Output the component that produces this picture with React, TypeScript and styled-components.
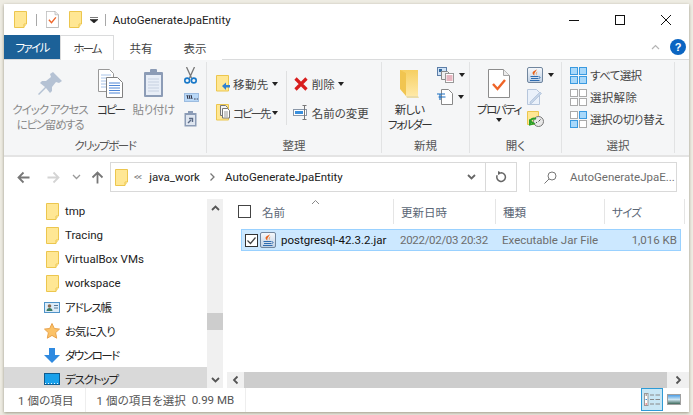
import React from "react";
import styled, { createGlobalStyle } from "styled-components";

const GlobalStyle = createGlobalStyle`
  html, body {
    margin: 0;
    height: 100%;
    overflow: hidden;
    background: #eeece3;
  }
  body {
    font-family: Roboto, "Noto Sans CJK JP", sans-serif;
    font-size: 11.5px;
    font-feature-settings: "palt";
    color: #333;
  }
`;

const Folder = ({ w = 13, h = 17 }: { w?: number; h?: number }) => (
  <svg width={w} height={h} viewBox="0 0 13 17">
    <path d="M.5.5h12v12.5h-2.5v3.500H.5z" fill="#ffe794" stroke="#ecc64e" />
    <path d="M10 13.500h2.500l-2.500 3z" fill="#f5d469" />
  </svg>
);

const PropertyFile = ({ size = 1 }: { size?: number }) => (
  <svg width={22 * size} height={29 * size} viewBox="0 0 22 29">
    <path d="M.5.5h15l6 6v22H.5z" fill="#fff" stroke="#8c8c8c" />
    <path d="M15.500.5v6h6" fill="#ececec" stroke="#a5a5a5" />
    <path d="M5 15l4.500 5L17 11" fill="none" stroke="#ef6427" strokeWidth="2.400" />
  </svg>
);

const Pin = () => (
  <svg width="24" height="24" viewBox="0 0 24 24">
    <path d="M15 0l9 9-3 2-3-1-4 5 0 4-2 2-4-5-7 7-1-1 7-7-5-4 2-2h4l5-4-1-3z" fill="#b5c2d4" />
  </svg>
);

const CopyDocs = () => (
  <svg width="25" height="29" viewBox="0 0 25 29">
    <path d="M.5.5h11l4 4v18H.5z" fill="#fff" stroke="#999" />
    <path d="M3 6h10M3 9h10M3 12h10M3 15h10M3 18h10" stroke="#a8c4e8" />
    <path d="M8.500 8.500h11l5 5v15h-16z" fill="#fff" stroke="#808080" />
    <path d="M11 14h11M11 16.500h11M11 19h11M11 21.500h11M11 24h11" stroke="#4e86d6" />
  </svg>
);

const Clipboard = () => (
  <svg width="21" height="29" viewBox="0 0 21 29">
    <rect x="1" y="3" width="19" height="25" rx="1" fill="#8c9cb6" />
    <rect x="3" y="6" width="15" height="20" fill="#e8eef7" />
    <path d="M5 10h11M5 13h11M5 16h11M5 19h11M5 22h11" stroke="#c6d0e0" />
    <rect x="7" y="0" width="7" height="5" rx="1" fill="#8c9cb6" />
  </svg>
);

const Scissors = () => (
  <svg width="13" height="17" viewBox="0 0 13 17">
    <path d="M2.500 0l5 11M10.500 0l-5 11" stroke="#777" strokeWidth="1.300" fill="none" />
    <circle cx="3.200" cy="13.500" r="2.400" fill="none" stroke="#1878c8" strokeWidth="1.600" />
    <circle cx="9.800" cy="13.500" r="2.400" fill="none" stroke="#1878c8" strokeWidth="1.600" />
  </svg>
);

const PathCopy = () => (
  <svg width="15" height="9" viewBox="0 0 15 9">
    <rect x=".5" y=".5" width="14" height="8" fill="#b9d8f7" stroke="#9cbce0" />
    <path d="M3 2l1 4M5 2l1 4M7 2l1 4" stroke="#223" />
    <path d="M10 6h.8M11.500 6h.8M13 6h.8" stroke="#223" />
  </svg>
);

const Shortcut = () => (
  <svg width="13" height="16" viewBox="0 0 13 16">
    <rect x=".5" y="2" width="12" height="13.500" fill="#8c9cb6" />
    <rect x="2" y="4" width="9" height="10" fill="#dfe6f0" />
    <rect x="4" y="0" width="5" height="3" fill="#8c9cb6" />
    <path d="M4 12l3-3M5 7.500h3.500V11" stroke="#5a6a85" strokeWidth="1.400" fill="none" />
  </svg>
);

const MoveTo = () => (
  <svg width="14" height="17" viewBox="0 0 14 17">
    <path d="M.5.500h12v15.500H.5z" fill="#ffe794" stroke="#ecc64e" />
    <path d="M6 11l4-3.500V10h4v2.500h-4V15z" fill="#2f80d0" />
  </svg>
);

const CopyTo = () => (
  <svg width="14" height="17" viewBox="0 0 14 17">
    <path d="M.5.500h12v15.500H.5z" fill="#ffe794" stroke="#ecc64e" />
    <path d="M4.500 1.500h5l2 2v8h-7z" fill="#f4f4f4" stroke="#777" />
    <path d="M6.500 4.500h5l2 2v7.500h-7z" fill="#fff" stroke="#777" />
    <path d="M8 8h4M8 10h4M8 12h4" stroke="#999" />
  </svg>
);

const DeleteX = () => (
  <svg width="14" height="14" viewBox="0 0 14 14">
    <path d="M1.500 1.500l11 11M12.500 1.500l-11 11" stroke="#d81e1e" strokeWidth="3.200" />
  </svg>
);

const Rename = () => (
  <svg width="16" height="15" viewBox="0 0 16 15">
    <rect x=".5" y="4.500" width="13" height="6" fill="#fff" stroke="#8a97a8" />
    <rect x="2" y="6" width="8" height="3" fill="#3a8fdc" />
    <path d="M11.500 1v13M9.500.5h4M9.500 14.500h4" stroke="#777" fill="none" />
  </svg>
);

const NewFolder = () => (
  <svg width="19" height="28" viewBox="0 0 19 28">
    <defs>
      <linearGradient id="nf" x1="0" y1="0" x2="0" y2="1">
        <stop offset="0" stopColor="#f6cf62" />
        <stop offset="1" stopColor="#ffe9a6" />
      </linearGradient>
    </defs>
    <path d="M0 0h18v26l-12 0-1-7-5-1z" fill="url(#nf)" />
    <path d="M0 0l6 3v23l-6-7z" fill="#f1c550" />
    <path d="M6 26h12l1 2H7z" fill="#eadca8" />
  </svg>
);

const NewItem = () => (
  <svg width="17" height="16" viewBox="0 0 17 16">
    <rect x=".5" y=".5" width="9" height="8" fill="#cfe2f6" stroke="#5c7ea8" />
    <rect x="2" y="2" width="3" height="3" fill="#33689c" />
    <path d="M4.500 4.500h6l2 2v6h-8z" fill="#eee" stroke="#888" />
    <rect x="8.500" y="6.500" width="8" height="9" fill="#fff" stroke="#999" />
    <path d="M9.500 9h6M9.500 11h6M9.500 13h6" stroke="#d06a80" />
  </svg>
);

const EasyAccess = () => (
  <svg width="16" height="16" viewBox="0 0 16 16">
    <path d="M4.500.5h7l4 4v11h-11z" fill="#fff" stroke="#888" />
    <path d="M0 5h8M1.500 8h7M3 5v6" stroke="#1c6ec0" strokeWidth="1.200" />
  </svg>
);

const Java = ({ s = 16 }: { s?: number }) => (
  <svg width={s} height={s} viewBox="0 0 16 16">
    <defs>
      <linearGradient id={`jar${s}`} x1="0" y1="0" x2="0" y2="1">
        <stop offset="0" stopColor="#f7f9fc" />
        <stop offset="1" stopColor="#bfd0e4" />
      </linearGradient>
    </defs>
    <rect x=".5" y=".5" width="15" height="15" rx="1.500" fill={`url(#jar${s})`} stroke="#71869e" />
    <path d="M9.500 2C10.500 4 6.500 5 7.500 8.500 5 7 5 5 7 4 8.500 3.300 9.500 3 9.500 2z" fill="#e8621a" />
    <path d="M11 4.500C9.500 5.500 9 6.500 9.800 8.500 8 7 8.500 5.300 11 4.500z" fill="#f08030" />
    <path d="M3.500 9.500h7.500M4 11.500h7M3 13.500h9.500" stroke="#2f6cb0" />
    <path d="M11.500 9.500c2 0 2 2 0 2" stroke="#2f6cb0" fill="none" />
  </svg>
);

const EditDoc = () => (
  <svg width="15" height="16" viewBox="0 0 15 16">
    <path d="M.5.5h9l3 3v12H.5z" fill="#eaf1fa" stroke="#b6c6dc" />
    <path d="M3 13L13 3l1.500 1.500-10 10H3z" fill="#c4d4e8" stroke="#a8bbd4" strokeWidth=".6" />
  </svg>
);

const History = () => (
  <svg width="17" height="16" viewBox="0 0 17 16">
    <path d="M.5.5h11v13H.5z" fill="#ffe794" stroke="#ecc64e" />
    <circle cx="11.500" cy="10.500" r="5" fill="#e8e8e8" stroke="#777" />
    <path d="M11.500 10.500l2-2M9 12l1-1" stroke="#555" />
    <path d="M3 11a4 4 0 0 1 6-3M6.500 12.500l-3.500 1V10z" fill="none" stroke="#2aa02a" strokeWidth="2" />
  </svg>
);

const SelectGrid = ({ cells, border }: { cells: boolean[]; border: string[] }) => (
  <svg width="17" height="17" viewBox="0 0 17 17">
    {[0, 1, 2, 3].map((i) => (
      <rect
        key={i}
        x={(i % 2) * 9 + 0.5}
        y={Math.floor(i / 2) * 9 + 0.5}
        width="7"
        height="7"
        fill={cells[i] ? "#a8d8fa" : "#fff"}
        stroke={border[i]}
      />
    ))}
  </svg>
);

const ArrowIcon = ({ dir, color }: { dir: "left" | "right" | "up"; color: string }) => {
  const rotate = dir === "left" ? 0 : dir === "right" ? 180 : 90;
  return (
    <svg width="13" height="13" viewBox="0 0 13 13" style={{ transform: `rotate(${rotate}deg)` }}>
      <path d="M6.500 1.500l-5 5 5 5M1.500 6.500h11" fill="none" stroke={color} strokeWidth="1.800" />
    </svg>
  );
};

const Chevron = ({ dir, color = "#666", w = 1.800 }: { dir: "up" | "down" | "left" | "right"; color?: string; w?: number }) => {
  const rotate = { up: 180, down: 0, left: 90, right: -90 }[dir];
  return (
    <svg width="9" height="6" viewBox="0 0 9 6" style={{ transform: `rotate(${rotate}deg)` }}>
      <path d="M1 1l3.500 3.500L8 1" fill="none" stroke={color} strokeWidth={w} />
    </svg>
  );
};

const Refresh = () => (
  <svg width="11" height="12" viewBox="0 0 11 12">
    <path d="M5 1.800a4.300 4.300 0 1 1-3.800 2.500" fill="none" stroke="#666" strokeWidth="1.500" />
    <path d="M2 0l4 2-4 2z" fill="#666" />
  </svg>
);

const SearchGlass = () => (
  <svg width="13" height="13" viewBox="0 0 13 13">
    <circle cx="8" cy="5" r="4" fill="none" stroke="#777" />
    <path d="M5 8l-4.500 4.500" stroke="#777" />
  </svg>
);

const Check = () => (
  <svg width="13" height="13" viewBox="0 0 13 13">
    <rect x=".5" y=".5" width="12" height="12" fill="#fff" stroke="#333" />
    <path d="M2.500 6.500l3 3 5-6" fill="none" stroke="#444" strokeWidth="1.200" />
  </svg>
);

const AddressBook = () => (
  <svg width="16" height="11" viewBox="0 0 16 11">
    <rect x=".5" y=".5" width="15" height="10" fill="#dcebf8" stroke="#4f93c8" />
    <circle cx="5.500" cy="4" r="1.800" fill="#8a6a50" />
    <path d="M2.500 9c0-4 6-4 6 0z" fill="#3c7a60" />
    <path d="M10 3.500h4M10 6h4" stroke="#5a7a98" />
  </svg>
);

const Star = () => (
  <svg width="16" height="16" viewBox="0 0 16 16">
    <path d="M8 .5l2.300 5 5.200.6-3.900 3.600 1.100 5.500L8 12.400l-4.700 2.800 1.100-5.500L.5 6.100l5.200-.6z" fill="#fbc267" stroke="#e8a24c" />
  </svg>
);

const Download = () => (
  <svg width="16" height="15" viewBox="0 0 16 15">
    <path d="M5 0h6v7h5l-8 8-8-8h5z" fill="#2f8ae0" />
  </svg>
);

const Desktop = () => (
  <svg width="16" height="12" viewBox="0 0 16 12">
    <rect x=".5" y=".5" width="15" height="11" fill="#19a0ea" stroke="#0f5c90" />
    <path d="M1 10.500h14" stroke="#e8f5ff" strokeDasharray="1 2" />
  </svg>
);

const DetailsView = () => (
  <svg width="16" height="13" viewBox="0 0 16 13">
    <rect x=".5" y=".5" width="3.500" height="12" fill="#fff" stroke="#999" />
    <path d="M1.500 2h1.500" stroke="#555" strokeWidth="1.200" />
    <path d="M1.500 6.500h1.500" stroke="#3a8fdc" strokeWidth="1.200" />
    <path d="M1.500 11h1.500" stroke="#d63030" strokeWidth="1.200" />
    <path d="M6 2h4M11.500 2H16M6 6.500h4M11.500 6.500H16M6 11h4M11.500 11H16" stroke="#888" />
  </svg>
);

const ThumbView = () => (
  <svg width="14" height="11" viewBox="0 0 14 11">
    <defs>
      <linearGradient id="tv" x1="0" y1="0" x2="0" y2="1">
        <stop offset="0" stopColor="#3f97e6" />
        <stop offset=".5" stopColor="#cfe6f2" />
        <stop offset="1" stopColor="#2e5c4a" />
      </linearGradient>
    </defs>
    <rect x=".5" y=".5" width="13" height="10" fill="url(#tv)" stroke="#a0a0a0" />
  </svg>
);

const QuickCaret = () => (
  <svg width="8" height="6" viewBox="0 0 8 6">
    <path d="M0 .5h8M0 2.500h8l-4 3.500z" fill="#222" stroke="#222" strokeWidth=".6" />
  </svg>
);

const HelpBadge = () => (
  <svg width="16" height="16" viewBox="0 0 16 16">
    <circle cx="8" cy="8" r="8" fill="#0b65c2" />
    <text x="8" y="12" textAnchor="middle" fontFamily="Liberation Sans, sans-serif" fontSize="11" fontWeight="700" fill="#fff">
      ?
    </text>
  </svg>
);

const MinIcon = () => (
  <svg width="10" height="10" viewBox="0 0 10 10">
    <path d="M0 5.500h10" stroke="#111" />
  </svg>
);
const MaxIcon = () => (
  <svg width="10" height="10" viewBox="0 0 10 10">
    <rect x=".5" y=".5" width="9" height="9" fill="none" stroke="#111" />
  </svg>
);
const CloseIcon = () => (
  <svg width="10" height="10" viewBox="0 0 10 10">
    <path d="M0 0l10 10M10 0L0 10" stroke="#111" />
  </svg>
);

const navItems = [
  { label: "tmp", icon: <Folder />, squeeze: 0 },
  { label: "Tracing", icon: <Folder />, squeeze: 0 },
  { label: "VirtualBox VMs", icon: <Folder />, squeeze: 0 },
  { label: "workspace", icon: <Folder />, squeeze: 0 },
  { label: "アドレス帳", icon: <AddressBook />, squeeze: -1.2 },
  { label: "お気に入り", icon: <Star />, squeeze: -1 },
  { label: "ダウンロード", icon: <Download />, squeeze: -1.5 },
  { label: "デスクトップ", icon: <Desktop />, squeeze: -1.2, active: true },
];

const App = () => {
  return (
    <>
      <GlobalStyle />
      <Window>
        <TitleBar>
          <Folder />
          <QatSep />
          <PropertyFile size={0.58} />
          <Folder />
          <CaretSlot><QuickCaret /></CaretSlot>
          <QatSep />
          <WindowTitle>AutoGenerateJpaEntity</WindowTitle>
          <WindowControls>
            <ControlBox><MinIcon /></ControlBox>
            <ControlBox><MaxIcon /></ControlBox>
            <ControlBox><CloseIcon /></ControlBox>
          </WindowControls>
        </TitleBar>

        <TabBar>
          <FileTab><Fit $ls={-1.6}>ファイル</Fit></FileTab>
          <Tab $active><Fit $ls={-2}>ホーム</Fit></Tab>
          <Tab>共有</Tab>
          <Tab>表示</Tab>
          <HelpArea>
            <Chevron dir="up" color="#b5b5b5" w={1.200} />
            <HelpBadge />
          </HelpArea>
        </TabBar>

        <Ribbon>
          <Group $width={203}>
            <GroupBody $left={8} $gap={10}>
              <BigButton $width={76}>
                <BigIcon><Pin /></BigIcon>
                <BigLabel $muted>
                  <Fit $ls={-1}>クイック アクセス</Fit>
                  <br />
                  <Fit $ls={-1.3}>にピン留めする</Fit>
                </BigLabel>
              </BigButton>
              <BigButton $width={25}>
                <BigIcon><CopyDocs /></BigIcon>
                <BigLabel><Fit $ls={-2}>コピー</Fit></BigLabel>
              </BigButton>
              <BigButton $width={41}>
                <BigIcon><Clipboard /></BigIcon>
                <BigLabel $muted><Fit $ls={-0.5}>貼り付け</Fit></BigLabel>
              </BigButton>
              <SmallColumn>
                <SmallRow><Scissors /></SmallRow>
                <SmallRow><PathCopy /></SmallRow>
                <SmallRow><Shortcut /></SmallRow>
              </SmallColumn>
            </GroupBody>
            <GroupLabel><Fit $ls={-1.4}>クリップボード</Fit></GroupLabel>
          </Group>

          <Group $width={175}>
            <GroupBody $left={9} $gap={0}>
              <OrganizeColumn $width={71}>
                <OrganizeRow><MoveTo /><Fit $ls={0.4}>移動先</Fit><Caret /></OrganizeRow>
                <OrganizeRow><CopyTo /><Fit $ls={-2}>コピー先</Fit><Caret /></OrganizeRow>
              </OrganizeColumn>
              <OrganizeDivider />
              <OrganizeColumn $width={90} $left={6}>
                <OrganizeRow><IconSlot><DeleteX /></IconSlot>削除<Caret /></OrganizeRow>
                <OrganizeRow><IconSlot><Rename /></IconSlot>名前の変更</OrganizeRow>
              </OrganizeColumn>
            </GroupBody>
            <GroupLabel>整理</GroupLabel>
          </Group>

          <Group $width={88}>
            <GroupBody $left={6} $gap={6}>
              <BigButton $width={43}>
                <BigIcon><NewFolder /></BigIcon>
                <BigLabel>
                  <Fit $ls={-0.8}>新しい</Fit>
                  <br />
                  <Fit $ls={-1.6}>フォルダー</Fit>
                </BigLabel>
              </BigButton>
              <SmallColumn>
                <SmallRow><NewItem /><Caret /></SmallRow>
                <SmallRow><EasyAccess /><Caret /></SmallRow>
              </SmallColumn>
            </GroupBody>
            <GroupLabel>新規</GroupLabel>
          </Group>

          <Group $width={92}>
            <GroupBody $left={7} $gap={6}>
              <BigButton $width={44}>
                <BigIcon><PropertyFile /></BigIcon>
                <BigLabel><Fit $ls={-1.4}>プロパティ</Fit></BigLabel>
                <Caret />
              </BigButton>
              <SmallColumn>
                <SmallRow><Java /><Caret /></SmallRow>
                <SmallRow><EditDoc /></SmallRow>
                <SmallRow><History /></SmallRow>
              </SmallColumn>
            </GroupBody>
            <GroupLabel>開く</GroupLabel>
          </Group>

          <Group $width={113}>
            <GroupBody $left={8} $gap={0}>
              <SmallColumn>
                <SelectRow>
                  <SelectGrid cells={[true, true, true, true]} border={["#3a9ae0", "#3a9ae0", "#3a9ae0", "#3a9ae0"]} />
                  <SelectText><Fit $ls={-0.6}>すべて選択</Fit></SelectText>
                </SelectRow>
                <SelectRow>
                  <SelectGrid cells={[false, false, false, false]} border={["#aaa", "#aaa", "#aaa", "#aaa"]} />
                  <SelectText><Fit $ls={0.3}>選択解除</Fit></SelectText>
                </SelectRow>
                <SelectRow>
                  <SelectGrid cells={[false, true, true, false]} border={["#aaa", "#3a9ae0", "#3a9ae0", "#aaa"]} />
                  <SelectText><Fit $ls={-0.4}>選択の切り替え</Fit></SelectText>
                </SelectRow>
              </SmallColumn>
            </GroupBody>
            <GroupLabel>選択</GroupLabel>
          </Group>
        </Ribbon>

        <AddressRow>
          <NavButton $width={30}><ArrowIcon dir="left" color="#777" /></NavButton>
          <NavButton $width={30}><ArrowIcon dir="right" color="#d4d4d4" /></NavButton>
          <NavButton $width={16}><Chevron dir="down" color="#999" w={1.300} /></NavButton>
          <NavButton $width={26}><ArrowIcon dir="up" color="#777" /></NavButton>
          <AddressBox>
            <Folder />
            <Crumbs>
              <CrumbMark>&lt;&lt;</CrumbMark>
              <span>java_work</span>
              <Chevron dir="right" color="#777" w={1.300} />
              <span>AutoGenerateJpaEntity</span>
            </Crumbs>
            <AddressDrop><Chevron dir="down" color="#666" /></AddressDrop>
            <RefreshCell><Refresh /></RefreshCell>
          </AddressBox>
          <SearchBox>
            <SearchGlass />
            <SearchText>AutoGenerateJpaE...</SearchText>
          </SearchBox>
        </AddressRow>

        <MainRow>
          <NavPane>
            {navItems.map((item) => (
              <NavRow key={item.label} $active={item.active}>
                <NavIcon>{item.icon}</NavIcon>
                <Fit $ls={item.squeeze}>{item.label}</Fit>
              </NavRow>
            ))}
          </NavPane>
          <VScroll>
            <ScrollEnd><Chevron dir="up" color="#555" /></ScrollEnd>
            <VThumb />
            <ScrollEnd><Chevron dir="down" color="#555" /></ScrollEnd>
          </VScroll>

          <ListPane>
            <ListHeader>
              <NameHeader>
                <SortMark><Chevron dir="up" color="#888" w={1} /></SortMark>
                <Check0 />
                名前
              </NameHeader>
              <HeaderCell $width={102}>更新日時</HeaderCell>
              <HeaderCell $width={109}>種類</HeaderCell>
              <HeaderCell $width={80}><Fit $ls={-0.7}>サイズ</Fit></HeaderCell>
            </ListHeader>

            <FileRow>
              <FileName>
                <Check />
                <Java s={16} />
                <span>postgresql-42.3.2.jar</span>
              </FileName>
              <FileCell $width={102}><Fit $ls={-0.3}>2022/02/03 20:32</Fit></FileCell>
              <FileCell $width={109}>Executable Jar File</FileCell>
              <FileSize>1,016 KB</FileSize>
            </FileRow>

            <HScroll>
              <HEnd $width={17}><Chevron dir="left" color="#555" /></HEnd>
              <HThumb />
              <HEnd $width={22}><Chevron dir="right" color="#555" /></HEnd>
            </HScroll>
          </ListPane>
        </MainRow>

        <StatusBar>
          <StatusItem><Fit $ls={0.1}>1 個の項目</Fit></StatusItem>
          <StatusItem><Fit $ls={0.1}>1 個の項目を選択</Fit>&nbsp;&nbsp;0.99 MB</StatusItem>
          <ViewButtons>
            <ViewButton $active><DetailsView /></ViewButton>
            <ViewButton><ThumbView /></ViewButton>
          </ViewButtons>
        </StatusBar>
      </Window>
    </>
  );
};

export default App;

const Window = styled.div`
  margin: 4px 0 0 4px;
  width: 685px;
  height: 408px;
  background: #fff;
  display: flex;
  flex-direction: column;
  box-shadow: 0 1px 3px rgba(85, 80, 55, 0.55);
  overflow: hidden;
`;

const Fit = styled.span<{ $ls: number }>`
  letter-spacing: ${(p) => p.$ls}px;
  white-space: nowrap;
`;

const TitleBar = styled.div`
  height: 31px;
  display: flex;
  align-items: center;
  padding-left: 10px;
  gap: 10px;
  flex: none;
`;

const CaretSlot = styled.span`
  display: flex;
  margin: 0 -2px;
`;

const QatSep = styled.div`
  width: 1px;
  height: 12px;
  background: #a8a8a8;
  margin: 0 -1px;
`;

const WindowTitle = styled.div`
  color: #222;
  margin-left: -2px;
`;

const WindowControls = styled.div`
  margin-left: auto;
  display: flex;
`;

const ControlBox = styled.div`
  width: 46px;
  height: 31px;
  display: flex;
  align-items: center;
  justify-content: center;
`;

const TabBar = styled.div`
  height: 25px;
  flex: none;
  display: flex;
  box-sizing: border-box;
  border-bottom: 1px solid #dadbdc;
`;

const FileTab = styled.div`
  width: 56px;
  background: #1c6198;
  color: #fff;
  display: flex;
  align-items: center;
  justify-content: center;
`;

const Tab = styled.div<{ $active?: boolean }>`
  width: 54px;
  height: 25px;
  box-sizing: border-box;
  display: flex;
  align-items: center;
  justify-content: center;
  color: #444;
  background: #fff;
  ${(p) => (p.$active ? "border: 1px solid #dadbdc; border-bottom: none;" : "")}
`;

const HelpArea = styled.div`
  margin-left: auto;
  display: flex;
  align-items: center;
  gap: 10px;
  padding-right: 3px;
`;

const Ribbon = styled.div`
  height: 97px;
  flex: none;
  box-sizing: border-box;
  background: #f5f6f7;
  border-bottom: 2px solid #e4e4e4;
  padding: 2px 0;
  display: flex;
`;

const Group = styled.div<{ $width: number }>`
  width: ${(p) => p.$width}px;
  box-sizing: border-box;
  border-right: 1px solid #e2e3e4;
  display: flex;
  flex-direction: column;
`;

const GroupBody = styled.div<{ $left: number; $gap: number }>`
  height: 73px;
  margin-top: 2px;
  padding-left: ${(p) => p.$left}px;
  display: flex;
  gap: ${(p) => p.$gap}px;
`;

const GroupLabel = styled.div`
  height: 16px;
  line-height: 18px;
  text-align: center;
  color: #555;
`;

const BigButton = styled.div<{ $width: number }>`
  width: ${(p) => p.$width}px;
  display: flex;
  flex-direction: column;
  align-items: center;
`;

const BigIcon = styled.div`
  height: 39px;
  flex: none;
  display: flex;
  align-items: center;
  justify-content: center;
`;

const BigLabel = styled.div<{ $muted?: boolean }>`
  line-height: 15px;
  text-align: center;
  white-space: nowrap;
  color: ${(p) => (p.$muted ? "#8a8a8a" : "#333")};
`;

const SmallColumn = styled.div`
  display: flex;
  flex-direction: column;
`;

const SmallRow = styled.div`
  height: 22px;
  display: flex;
  align-items: center;
  gap: 5px;
`;

const SelectRow = styled(SmallRow)`
  gap: 3px;
  color: #444;
  white-space: nowrap;
`;

const SelectText = styled.span`
  margin-top: -1px;
`;

const Caret = styled.span`
  display: inline-block;
  width: 0;
  height: 0;
  border-left: 3.5px solid transparent;
  border-right: 3.5px solid transparent;
  border-top: 4px solid #222;
  flex: none;
`;

const OrganizeColumn = styled.div<{ $width: number; $left?: number }>`
  width: ${(p) => p.$width}px;
  padding: 5px 0 0 ${(p) => p.$left ?? 0}px;
  display: flex;
  flex-direction: column;
`;

const OrganizeRow = styled.div`
  height: 29px;
  display: flex;
  align-items: center;
  gap: 3px;
  color: #444;
  white-space: nowrap;
`;

const IconSlot = styled.span`
  width: 16px;
  display: flex;
  justify-content: center;
`;

const OrganizeDivider = styled.div`
  width: 1px;
  height: 54px;
  margin-top: 7px;
  background: #dfe0e1;
  flex: none;
`;

const AddressRow = styled.div`
  height: 41px;
  flex: none;
  box-sizing: border-box;
  padding: 5px 0 6px 4px;
  display: flex;
`;

const NavButton = styled.div<{ $width: number }>`
  width: ${(p) => p.$width}px;
  display: flex;
  align-items: center;
  justify-content: center;
`;

const AddressBox = styled.div`
  width: 407px;
  box-sizing: border-box;
  border: 1px solid #d9d9d9;
  padding-left: 4px;
  display: flex;
  align-items: center;
`;

const Crumbs = styled.div`
  display: flex;
  align-items: center;
  gap: 8px;
  margin-left: 6px;
  color: #222;
`;

const CrumbMark = styled.span`
  color: #777;
  font-size: 9px;
  letter-spacing: -1px;
`;

const AddressDrop = styled.div`
  margin-left: auto;
  width: 28px;
  display: flex;
  justify-content: center;
`;

const RefreshCell = styled.div`
  width: 30px;
  height: 100%;
  border-left: 1px solid #d9d9d9;
  display: flex;
  align-items: center;
  justify-content: center;
`;

const SearchBox = styled.div`
  width: 148px;
  margin-left: 12px;
  box-sizing: border-box;
  border: 1px solid #d9d9d9;
  padding-left: 14px;
  display: flex;
  align-items: center;
  gap: 13px;
  & > svg {
    flex: none;
  }
`;

const SearchText = styled.div`
  color: #6d6d6d;
  white-space: nowrap;
`;

const MainRow = styled.div`
  height: 190px;
  flex: none;
  display: flex;
`;

const NavPane = styled.div`
  width: 203px;
  padding-top: 1px;
  overflow: hidden;
  flex: none;
`;

const NavRow = styled.div<{ $active?: boolean }>`
  height: 24px;
  display: flex;
  align-items: center;
  color: #222;
  background: ${(p) => (p.$active ? "#d9d9d9" : "transparent")};
`;

const NavIcon = styled.div`
  width: 16px;
  margin: 0 5px 0 40px;
  display: flex;
  justify-content: center;
`;

const VScroll = styled.div`
  width: 16px;
  background: #f0f0f0;
  margin-top: 1px;
  display: flex;
  flex-direction: column;
  flex: none;
`;

const ScrollEnd = styled.div`
  height: 17px;
  display: flex;
  align-items: center;
  justify-content: center;
`;

const VThumb = styled.div`
  height: 17px;
  margin-top: 97px;
  margin-bottom: auto;
  background: #cdcdcd;
`;

const ListPane = styled.div`
  margin-left: 4px;
  flex: 1;
  min-width: 0;
  display: flex;
  flex-direction: column;
`;

const ListHeader = styled.div`
  height: 26px;
  margin-top: 1px;
  display: flex;
  flex: none;
`;

const NameHeader = styled.div`
  position: relative;
  width: 167px;
  box-sizing: border-box;
  height: 25px;
  border-right: 1px solid #e5e5e5;
  padding-left: 11px;
  display: flex;
  align-items: center;
  gap: 11px;
  color: #5a6675;
`;

const Check0 = styled.span`
  width: 11px;
  height: 11px;
  border: 1px solid #444;
  flex: none;
`;

const SortMark = styled.span`
  position: absolute;
  left: 84px;
  top: 0;
  display: flex;
`;

const HeaderCell = styled.div<{ $width: number }>`
  width: ${(p) => p.$width}px;
  height: 25px;
  box-sizing: border-box;
  border-right: 1px solid #e5e5e5;
  padding-left: 7px;
  display: flex;
  align-items: center;
  color: #5a6675;
`;

const FileRow = styled.div`
  width: 440px;
  height: 22px;
  margin: 4px 0 0 14px;
  box-sizing: border-box;
  background: #cce8ff;
  border: 1px solid #99d1ff;
  display: flex;
  align-items: center;
  flex: none;
`;

const FileName = styled.div`
  width: 152px;
  box-sizing: border-box;
  padding-left: 3px;
  display: flex;
  align-items: center;
  gap: 2px;
  color: #111;
  white-space: nowrap;
  & > svg {
    flex: none;
  }
  & > span {
    margin-left: 3px;
  }
`;

const FileCell = styled.div<{ $width: number }>`
  width: ${(p) => p.$width}px;
  box-sizing: border-box;
  padding-left: 6px;
  color: #6d6d6d;
  white-space: nowrap;
`;

const FileSize = styled.div`
  flex: 1;
  padding-right: 3px;
  text-align: right;
  color: #6d6d6d;
  white-space: nowrap;
`;

const HScroll = styled.div`
  height: 16px;
  margin-top: auto;
  background: #f0f0f0;
  display: flex;
  flex: none;
`;

const HEnd = styled.div<{ $width: number }>`
  width: ${(p) => p.$width}px;
  display: flex;
  align-items: center;
  justify-content: center;
`;

const HThumb = styled.div`
  flex: 1;
  background: #cdcdcd;
`;

const StatusBar = styled.div`
  flex: 1;
  display: flex;
  align-items: center;
  padding-left: 3px;
`;

const StatusItem = styled.div`
  height: 100%;
  padding: 0 11px;
  display: flex;
  align-items: center;
  color: #555;
  border-right: 1px solid #eee;
  white-space: nowrap;
`;

const ViewButtons = styled.div`
  margin-left: auto;
  height: 100%;
  display: flex;
  padding-right: 8px;
  gap: 4px;
`;

const ViewButton = styled.div<{ $active?: boolean }>`
  width: ${(p) => (p.$active ? "22px" : "14px")};
  height: 23px;
  box-sizing: border-box;
  display: flex;
  align-items: center;
  justify-content: center;
  ${(p) => (p.$active ? "background: #c9e7f5; border: 1px solid #2e9bd6;" : "")}
`;
